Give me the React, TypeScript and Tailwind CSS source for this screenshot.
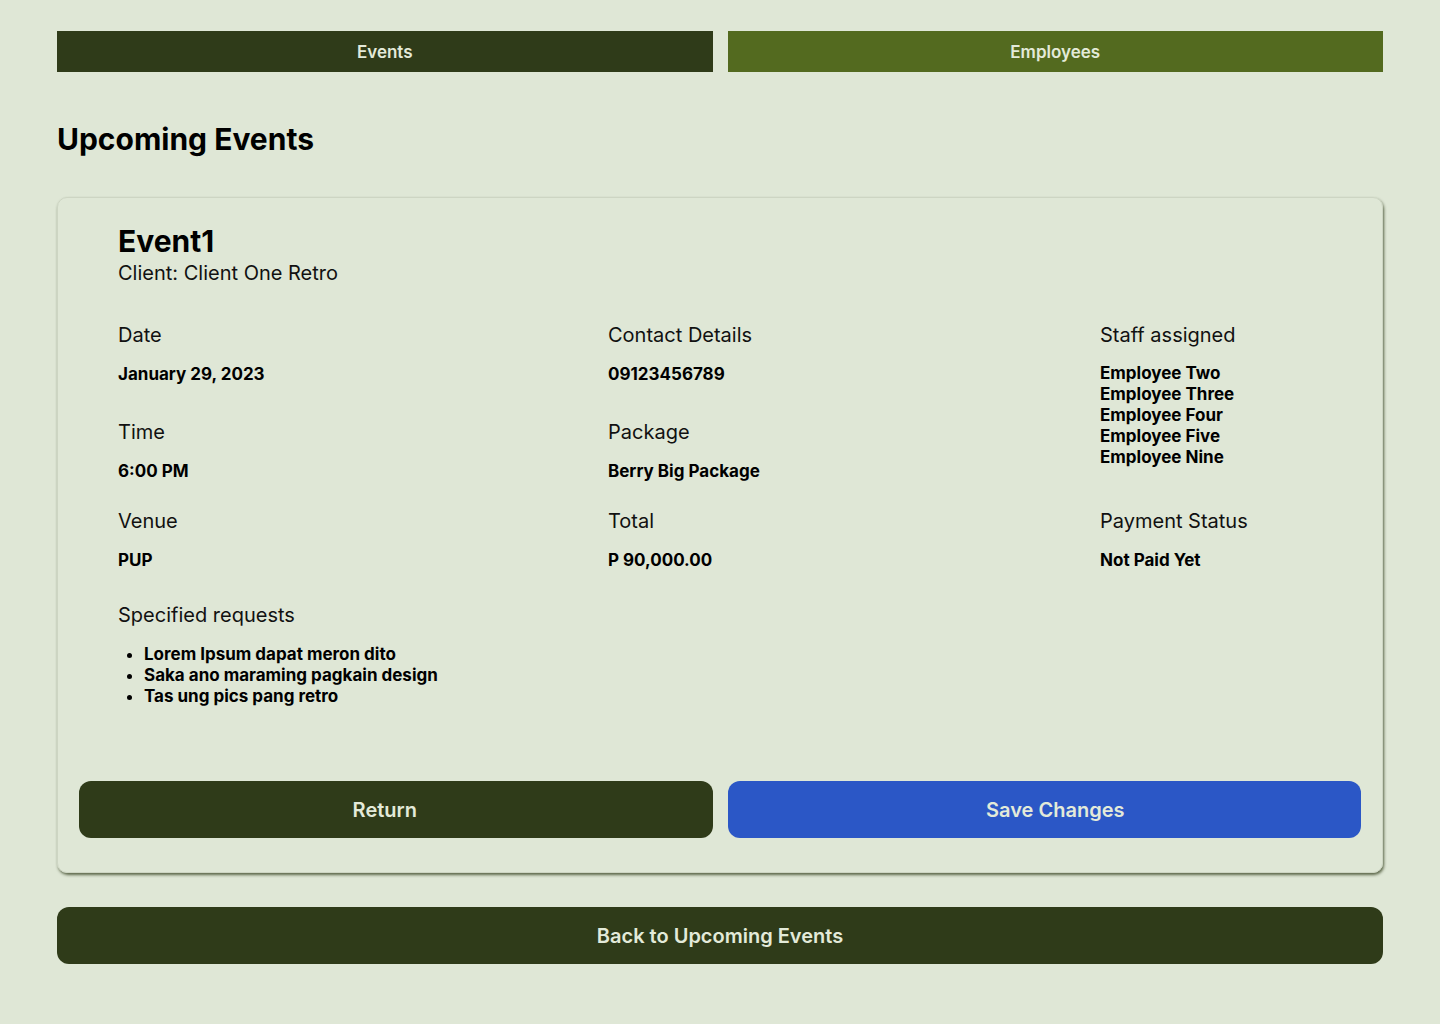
import React from 'react'

type Field = {
  label: string
  value: string
}

function InfoBlock({ label, value }: Field) {
  return (
    <div className="flex flex-col">
      <span className="text-[20px] leading-[28px] text-[#111]">{label}</span>
      <span className="mt-[15px] text-[17px] leading-[21px] font-bold text-black">{value}</span>
    </div>
  )
}

const staff = ['Employee Two', 'Employee Three', 'Employee Four', 'Employee Five', 'Employee Nine']

const requests = [
  'Lorem Ipsum dapat meron dito',
  'Saka ano maraming pagkain design',
  'Tas ung pics pang retro',
]

export default function App() {
  return (
    <div
      className="min-h-[1024px] w-full bg-[#dfe7d6] px-[57px] pt-[31px] pb-[60px]"
      style={{ fontFamily: 'Inter, "Noto Sans", sans-serif' }}
    >
      {/* Top tabs */}
      <div className="flex gap-[15px]">
        <button className="flex-1 h-[41px] pt-[3px] bg-[#2f3b19] text-[#e3ead9] text-[17px] font-semibold">
          Events
        </button>
        <button className="flex-1 h-[41px] pt-[3px] bg-[#536a1f] text-[#e3ead9] text-[17px] font-semibold">
          Employees
        </button>
      </div>

      <h1 className="mt-[49px] text-[30px] leading-[36px] font-bold text-black">Upcoming Events</h1>

      {/* Event card */}
      <div className="mt-[40px] rounded-[10px] border border-[#cdd5c3] shadow-[1px_2px_3px_rgba(47,59,25,0.75)] pt-[25px] pb-[34px]">
        <div className="pl-[60px]">
          <h2 className="text-[30px] leading-[36px] font-bold text-black">Event1</h2>
          <p className="text-[20px] leading-[28px] text-[#111]">Client: Client One Retro</p>

          <div className="mt-[34px] grid grid-cols-[490px_492px_1fr] grid-rows-[97px_89px_94px_auto]">
            <InfoBlock label="Date" value="January 29, 2023" />
            <InfoBlock label="Contact Details" value="09123456789" />
            <div className="row-span-2 flex flex-col">
              <span className="text-[20px] leading-[28px] text-[#111]">Staff assigned</span>
              <div className="mt-[14px] flex flex-col">
                {staff.map((name) => (
                  <span key={name} className="text-[17px] leading-[21px] font-bold text-black">
                    {name}
                  </span>
                ))}
              </div>
            </div>

            <InfoBlock label="Time" value="6:00 PM" />
            <InfoBlock label="Package" value="Berry Big Package" />

            <InfoBlock label="Venue" value="PUP" />
            <InfoBlock label="Total" value="P 90,000.00" />
            <InfoBlock label="Payment Status" value="Not Paid Yet" />

            <div className="col-span-3 flex flex-col">
              <span className="text-[20px] leading-[28px] text-[#111]">Specified requests</span>
              <ul className="mt-[15px] list-disc pl-[26px]">
                {requests.map((r) => (
                  <li key={r} className="text-[17px] leading-[21px] font-bold text-black">
                    {r}
                  </li>
                ))}
              </ul>
            </div>
          </div>
        </div>

        {/* Actions */}
        <div className="mt-[74px] px-[21px] flex gap-[15px]">
          <button className="flex-1 h-[57px] pr-[22px] rounded-[12px] bg-[#2f3b19] text-[#e3ead9] text-[20px] font-semibold">
            Return
          </button>
          <button className="flex-1 h-[57px] pl-[22px] rounded-[12px] bg-[#2b57c6] text-[#e3ead9] text-[20px] font-semibold">
            Save Changes
          </button>
        </div>
      </div>

      <button className="mt-[34px] w-full h-[57px] rounded-[12px] bg-[#2f3b19] text-[#e3ead9] text-[20px] font-semibold">
        Back to Upcoming Events
      </button>
    </div>
  )
}
